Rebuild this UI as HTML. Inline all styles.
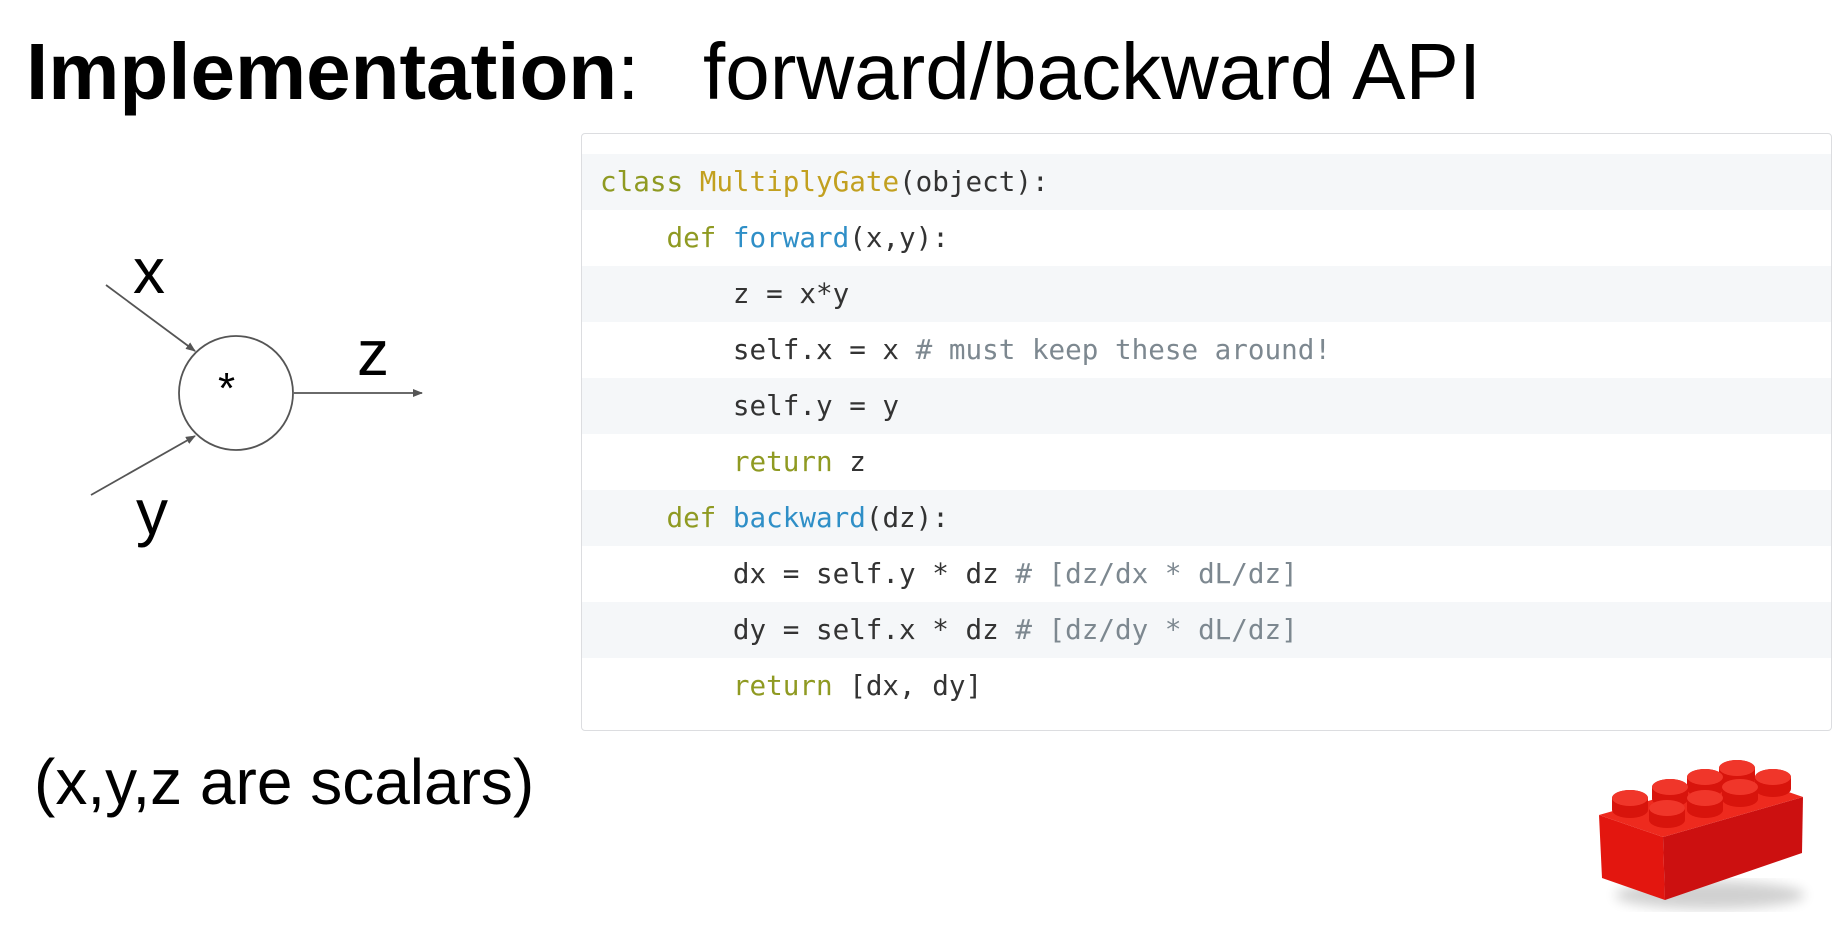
<!DOCTYPE html>
<html><head><meta charset="utf-8"><style>
html,body{margin:0;padding:0;background:#fff;width:1847px;height:938px;overflow:hidden;position:relative;font-family:"Liberation Sans",Arial,sans-serif}
.t{position:absolute;white-space:nowrap;color:#000}
#code{position:absolute;left:581px;top:133px;width:1251px;height:598px;border:1.5px solid #dcdde0;border-radius:4px;box-sizing:border-box;overflow:hidden;background:#fff}
.row{position:absolute;left:0;right:0;height:56px;font-family:"DejaVu Sans Mono","Liberation Mono",monospace;font-size:27.6px;line-height:56px;color:#333;white-space:pre;padding-left:18px}
.s{background:#f5f7f9}
.k{color:#8f9a22}.c{color:#c2a020}.f{color:#2f8fc7}.cm{color:#7d8890}
</style></head><body>
<div class="t" style="left:26px;top:22px;font-size:80px;line-height:100px"><b>Implementation</b>:</div>
<div class="t" style="left:703px;top:22px;font-size:80px;line-height:100px">forward/backward API</div>

<svg style="position:absolute;left:0;top:0" width="600" height="938">
<defs><marker id="a" markerWidth="10" markerHeight="8" refX="9" refY="4" orient="auto" markerUnits="userSpaceOnUse"><path d="M0,0 L10,4 L0,8 z" fill="#555"/></marker></defs>
<circle cx="236" cy="393" r="57" fill="none" stroke="#555" stroke-width="1.8"/>
<line x1="106" y1="285" x2="195" y2="351" stroke="#555" stroke-width="1.8" marker-end="url(#a)"/>
<line x1="91" y1="495" x2="195" y2="436" stroke="#555" stroke-width="1.8" marker-end="url(#a)"/>
<line x1="294" y1="393" x2="422" y2="393" stroke="#555" stroke-width="1.8" marker-end="url(#a)"/>
</svg>
<div class="t" style="left:133px;top:236px;font-size:64px;line-height:70px">x</div>
<div class="t" style="left:357px;top:318px;font-size:64px;line-height:70px">z</div>
<div class="t" style="left:136px;top:477px;font-size:64px;line-height:70px">y</div>
<div class="t" style="left:218px;top:364px;font-size:44px;line-height:50px">*</div>
<div class="t" style="left:34px;top:745px;font-size:64px;line-height:74px">(x,y,z are scalars)</div>

<div id="code">
<div class="row s" style="top:20px"><span class="k">class</span> <span class="c">MultiplyGate</span>(object):</div>
<div class="row" style="top:76px">    <span class="k">def</span> <span class="f">forward</span>(x,y):</div>
<div class="row s" style="top:132px">        z = x*y</div>
<div class="row" style="top:188px">        self.x = x <span class="cm"># must keep these around!</span></div>
<div class="row s" style="top:244px">        self.y = y</div>
<div class="row" style="top:300px">        <span class="k">return</span> z</div>
<div class="row s" style="top:356px">    <span class="k">def</span> <span class="f">backward</span>(dz):</div>
<div class="row" style="top:412px">        dx = self.y * dz <span class="cm"># [dz/dx * dL/dz]</span></div>
<div class="row s" style="top:468px">        dy = self.x * dz <span class="cm"># [dz/dy * dL/dz]</span></div>
<div class="row" style="top:524px">        <span class="k">return</span> [dx, dy]</div>
</div>

<svg style="position:absolute;left:0;top:0" width="1847" height="938">
<defs><filter id="bl"><feGaussianBlur stdDeviation="6"/></filter></defs>
<ellipse cx="1710" cy="895" rx="95" ry="14" fill="#000" opacity="0.18" filter="url(#bl)"/>
<polygon points="1599,815 1663,837 1665,900 1602,878" fill="#e3160f"/>
<polygon points="1663,837 1803,797 1802,853 1665,900" fill="#cc1010"/>
<polygon points="1599,815 1739,775 1803,797 1663,837" fill="#ee2a1e"/>
<g>
<path d="M1719,780v-12a18,8 0 0 1 36,0v12a18,8 0 0 1 -36,0z" fill="#d8140c"/><ellipse cx="1737" cy="768" rx="18" ry="8" fill="#f0362a"/>
<path d="M1755,789v-12a18,8 0 0 1 36,0v12a18,8 0 0 1 -36,0z" fill="#d8140c"/><ellipse cx="1773" cy="777" rx="18" ry="8" fill="#f0362a"/>
<path d="M1687,789v-12a18,8 0 0 1 36,0v12a18,8 0 0 1 -36,0z" fill="#d8140c"/><ellipse cx="1705" cy="777" rx="18" ry="8" fill="#f0362a"/>
<path d="M1722,799v-12a18,8 0 0 1 36,0v12a18,8 0 0 1 -36,0z" fill="#d8140c"/><ellipse cx="1740" cy="787" rx="18" ry="8" fill="#f0362a"/>
<path d="M1652,799v-12a18,8 0 0 1 36,0v12a18,8 0 0 1 -36,0z" fill="#d8140c"/><ellipse cx="1670" cy="787" rx="18" ry="8" fill="#f0362a"/>
<path d="M1687,810v-12a18,8 0 0 1 36,0v12a18,8 0 0 1 -36,0z" fill="#d8140c"/><ellipse cx="1705" cy="798" rx="18" ry="8" fill="#f0362a"/>
<path d="M1612,810v-12a18,8 0 0 1 36,0v12a18,8 0 0 1 -36,0z" fill="#d8140c"/><ellipse cx="1630" cy="798" rx="18" ry="8" fill="#f0362a"/>
<path d="M1649,820v-12a18,8 0 0 1 36,0v12a18,8 0 0 1 -36,0z" fill="#d8140c"/><ellipse cx="1667" cy="808" rx="18" ry="8" fill="#f0362a"/>
</g>
</svg>
</body></html>
